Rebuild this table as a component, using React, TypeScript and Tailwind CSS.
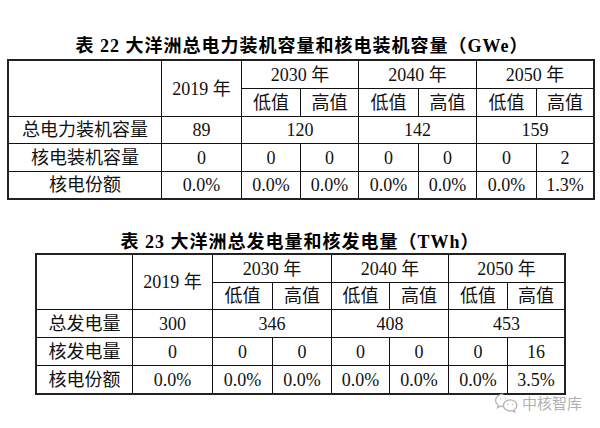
import React from 'react';

type Cell = { text?: string; cls?: string };

const Td = ({ text = '', cls = '' }: Cell) => (
  <div className={`flex items-center justify-center bg-white text-[18px] leading-none text-[#111] ${cls}`}>
    {text}
  </div>
);

const WeChatIcon = () => (
  <svg width="25" height="21" viewBox="0 0 24 20" fill="none" stroke="#b4b4b4" strokeWidth="1.3">
    <path d="M9 2C4.8 2 1.5 4.7 1.5 8c0 1.9 1 3.5 2.6 4.6L3.5 15l2.8-1.5c.9.3 1.8.4 2.7.4" />
    <path d="M15.5 7.5c-3.6 0-6.5 2.4-6.5 5.3s2.9 5.3 6.5 5.3c.7 0 1.4-.1 2-.3l2.4 1.3-.6-2c1.5-1 2.6-2.6 2.6-4.3 0-2.9-2.9-5.3-6.4-5.3z" />
    <circle cx="6.3" cy="6.5" r="0.7" fill="#b4b4b4" stroke="none" />
    <circle cx="11.3" cy="6.5" r="0.7" fill="#b4b4b4" stroke="none" />
    <circle cx="13.3" cy="11.8" r="0.6" fill="#b4b4b4" stroke="none" />
    <circle cx="17.8" cy="11.8" r="0.6" fill="#b4b4b4" stroke="none" />
  </svg>
);

export default function App() {
  return (
    <div className="relative w-[600px] h-[428px] bg-white font-['Liberation_Serif','Noto_Sans_CJK_SC',serif] overflow-hidden">
      {/* Table 22 */}
      <div className="pt-[34px] pl-[4px] h-[58px] text-center text-[18px] leading-[24px] font-bold tracking-[1px] text-black">
        表 22 大洋洲总电力装机容量和核电装机容量（GWe）
      </div>
      <div className="ml-[7px] mt-[1px] w-[588px] grid grid-cols-[152px_79px_58px_57px_59px_57px_59px_56px] grid-rows-[27px_27px_26px_27px_26px] gap-px bg-[#111] border-2 border-[#222]">
        <Td cls="row-span-2" />
        <Td cls="row-span-2" text="2019 年" />
        <Td cls="col-span-2" text="2030 年" />
        <Td cls="col-span-2" text="2040 年" />
        <Td cls="col-span-2" text="2050 年" />
        <Td text="低值" />
        <Td text="高值" />
        <Td text="低值" />
        <Td text="高值" />
        <Td text="低值" />
        <Td text="高值" />

        <Td text="总电力装机容量" />
        <Td text="89" />
        <Td cls="col-span-2" text="120" />
        <Td cls="col-span-2" text="142" />
        <Td cls="col-span-2" text="159" />

        <Td text="核电装机容量" />
        <Td text="0" />
        <Td text="0" />
        <Td text="0" />
        <Td text="0" />
        <Td text="0" />
        <Td text="0" />
        <Td text="2" />

        <Td text="核电份额" />
        <Td text="0.0%" />
        <Td text="0.0%" />
        <Td text="0.0%" />
        <Td text="0.0%" />
        <Td text="0.0%" />
        <Td text="0.0%" />
        <Td text="1.3%" />
      </div>

      {/* Table 23 */}
      <div className="mt-[30px] h-[23px] text-center text-[18px] leading-[24px] font-bold tracking-[1px] text-black">
        表 23 大洋洲总发电量和核发电量（TWh）
      </div>
      <div className="ml-[35px] w-[531px] grid grid-cols-[95px_79px_59px_58px_57px_58px_58px_56px] grid-rows-[27px_26px_27px_27px_27px] gap-px bg-[#111] border-2 border-[#222]">
        <Td cls="row-span-2" />
        <Td cls="row-span-2" text="2019 年" />
        <Td cls="col-span-2" text="2030 年" />
        <Td cls="col-span-2" text="2040 年" />
        <Td cls="col-span-2" text="2050 年" />
        <Td text="低值" />
        <Td text="高值" />
        <Td text="低值" />
        <Td text="高值" />
        <Td text="低值" />
        <Td text="高值" />

        <Td text="总发电量" />
        <Td text="300" />
        <Td cls="col-span-2" text="346" />
        <Td cls="col-span-2" text="408" />
        <Td cls="col-span-2" text="453" />

        <Td text="核发电量" />
        <Td text="0" />
        <Td text="0" />
        <Td text="0" />
        <Td text="0" />
        <Td text="0" />
        <Td text="0" />
        <Td text="16" />

        <Td text="核电份额" />
        <Td text="0.0%" />
        <Td text="0.0%" />
        <Td text="0.0%" />
        <Td text="0.0%" />
        <Td text="0.0%" />
        <Td text="0.0%" />
        <Td text="3.5%" />
      </div>

      {/* watermark */}
      <div className="absolute left-[494px] top-[392px] flex items-center gap-[3px] font-['Noto_Sans_CJK_SC',sans-serif] text-[15px] leading-none text-[#b0b0b0]">
        <WeChatIcon />
        <span>中核智库</span>
      </div>
    </div>
  );
}
